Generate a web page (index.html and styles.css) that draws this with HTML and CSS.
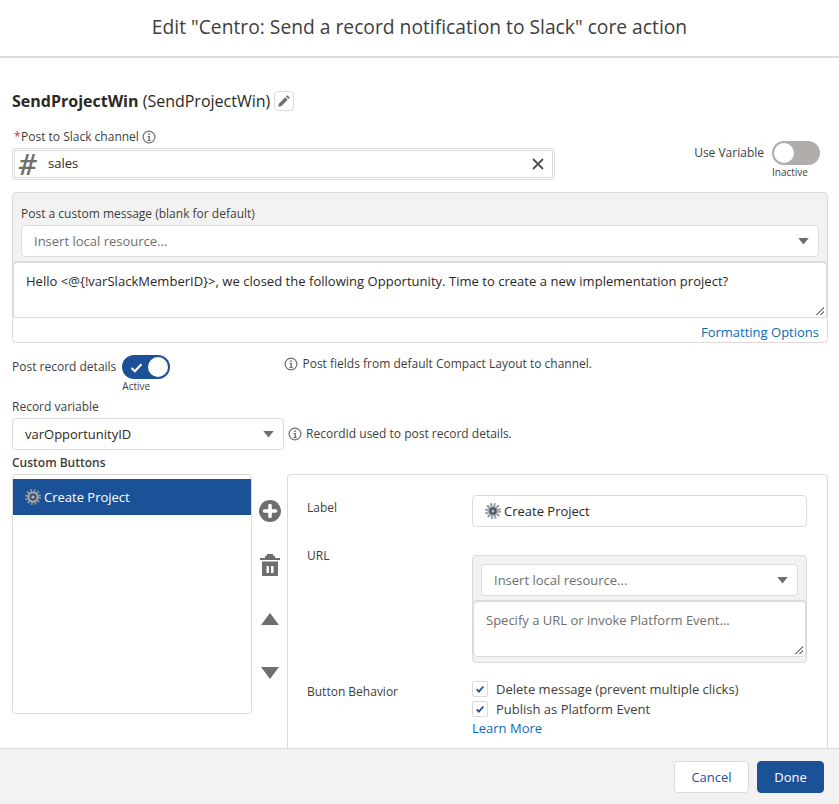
FILE: index.html
```html
<!DOCTYPE html>
<html lang="en">
<head>
    <meta charset="UTF-8">
    <meta name="viewport" content="width=device-width, initial-scale=1.0">
    <title>Edit core action</title>
    <link rel="stylesheet" href="styles.css">
</head>
<body>
    <svg class="svg-defs" width="0" height="0">
        <symbol id="gear" viewBox="0 0 16 16">
            <circle cx="8" cy="8" r="6.500" fill="none" stroke="#8d9299" stroke-width="3" stroke-dasharray="1.700 1.700"/>
            <circle cx="8" cy="8" r="5.600" fill="#a9aeb5"/>
            <circle cx="8" cy="8" r="3.700" fill="#4e5560"/>
            <circle cx="8" cy="8" r="1.600" fill="#a9bdd0"/>
        </symbol>
        <symbol id="info" viewBox="0 0 14 14">
            <circle cx="7" cy="7" r="5.900" fill="none" stroke="#706e6b" stroke-width="1.200"/>
            <circle cx="7" cy="4.200" r=".9" fill="#706e6b"/>
            <path fill="#706e6b" d="M5.500 6h2.400v3.900h.8v1H5.400v-1h1.100V7h-1z"/>
        </symbol>
        <symbol id="caret" viewBox="0 0 12 8">
            <path fill="#706e6b" d="M0 0h12L6 7.500z"/>
        </symbol>
        <symbol id="tick" viewBox="0 0 12 12">
            <path fill="none" stroke="#1b5297" stroke-width="2.200" d="M2 6.500l2.700 2.700L10 3"/>
        </symbol>
    </svg>

    <div class="modal">
        <header class="modal-header">
            <h1>Edit "Centro: Send a record notification to Slack" core action</h1>
        </header>

        <main class="modal-body">
            <div class="title-row">
                <h2><strong>SendProjectWin</strong> (SendProjectWin)</h2>
                <button class="edit-btn" type="button" aria-label="Edit">
                    <svg width="14" height="14" viewBox="0 0 14 14"><path fill="#706e6b" d="M10.300 1.200l2.500 2.500-1.300 1.300L9 2.500zM8.200 3.300l2.500 2.500-6.200 6.200-3.300.8.800-3.300z"/></svg>
                </button>
            </div>

            <div class="channel-row">
                <div class="channel-field">
                    <label class="field-label"><span class="req">*</span>Post to Slack channel <svg class="info" width="14" height="14"><use href="#info"/></svg></label>
                    <div class="channel-input">
                        <span class="hash">#</span>
                        <span class="channel-name">sales</span>
                        <svg class="clear" width="12" height="12" viewBox="0 0 12 12"><path stroke="#514f4d" stroke-width="1.800" d="M1 1l10 10M11 1L1 11"/></svg>
                    </div>
                </div>
                <div class="use-variable">
                    <span class="toggle-label">Use Variable</span>
                    <div class="toggle-wrap">
                        <span class="toggle off"><span class="knob"></span></span>
                        <span class="toggle-text">Inactive</span>
                    </div>
                </div>
            </div>

            <section class="message-panel">
                <label class="panel-label">Post a custom message (blank for default)</label>
                <div class="select select-wide">
                    <span class="placeholder">Insert local resource...</span>
                    <svg width="11" height="7"><use href="#caret"/></svg>
                </div>
                <div class="message-box">Hello &lt;@{!varSlackMemberID}&gt;, we closed the following Opportunity. Time to create a new implementation project?<span class="grip"></span></div>
                <div class="format-link"><a href="#">Formatting Options</a></div>
            </section>

            <div class="details-row">
                <span class="toggle-label">Post record details</span>
                <div class="toggle-wrap">
                    <span class="toggle on">
                        <svg width="13" height="13" viewBox="0 0 12 12"><path fill="none" stroke="#fff" stroke-width="2" d="M1.500 6.500l3 3L10.500 3"/></svg>
                        <span class="knob"></span>
                    </span>
                    <span class="toggle-text">Active</span>
                </div>
                <p class="hint details-hint"><svg class="info" width="14" height="14"><use href="#info"/></svg> Post fields from default Compact Layout to channel.</p>
            </div>

            <label class="field-label var-label">Record variable</label>
            <div class="var-row">
                <div class="select var-select">
                    <span>varOpportunityID</span>
                    <svg width="11" height="7"><use href="#caret"/></svg>
                </div>
                <p class="hint"><svg class="info" width="14" height="14"><use href="#info"/></svg> RecordId used to post record details.</p>
            </div>

            <h3 class="buttons-title">Custom Buttons</h3>
            <div class="buttons-row">
                <div class="button-list">
                    <div class="button-item selected">
                        <svg width="16" height="16"><use href="#gear"/></svg>
                        Create Project
                    </div>
                </div>

                <div class="list-tools">
                    <svg class="tool-add" width="22" height="22" viewBox="0 0 22 22"><circle cx="11" cy="11" r="11" fill="#706e6b"/><path stroke="#fff" stroke-width="3.600" stroke-linecap="round" d="M11 5.500v11M5.500 11h11"/></svg>
                    <svg class="tool-trash" width="20" height="22" viewBox="0 0 20 22"><path fill="#706e6b" d="M0 4h20v2H0zM7 0h6v1.800h2V4H5V1.800h2zM2 7.500h16V21a1 1 0 0 1-1 1H3a1 1 0 0 1-1-1z"/><path fill="#fff" d="M6.500 12h2.500v7H6.500zM11 12h2.500v7H11z"/></svg>
                    <svg class="tool-up" width="18" height="12" viewBox="0 0 18 12"><path fill="#706e6b" d="M9 0l9 12H0z"/></svg>
                    <svg class="tool-down" width="18" height="12" viewBox="0 0 18 12"><path fill="#706e6b" d="M0 0h18L9 12z"/></svg>
                </div>

                <div class="button-detail">
                    <div class="detail-row label-row">
                        <span class="detail-label">Label</span>
                        <div class="text-input">
                            <svg width="16" height="16"><use href="#gear"/></svg>
                            Create Project
                        </div>
                    </div>
                    <div class="detail-row url-row">
                        <span class="detail-label">URL</span>
                        <div class="url-panel">
                            <div class="select url-select">
                                <span class="placeholder">Insert local resource...</span>
                                <svg width="11" height="7"><use href="#caret"/></svg>
                            </div>
                            <div class="url-box">Specify a URL or invoke Platform Event...<span class="grip"></span></div>
                        </div>
                    </div>
                    <div class="detail-row behavior-row">
                        <span class="detail-label">Button Behavior</span>
                        <div class="checks">
                            <div class="check-line"><span class="checkbox"><svg width="10" height="10"><use href="#tick"/></svg></span> Delete message (prevent multiple clicks)</div>
                            <div class="check-line"><span class="checkbox"><svg width="10" height="10"><use href="#tick"/></svg></span> Publish as Platform Event</div>
                            <a class="learn-more" href="#">Learn More</a>
                        </div>
                    </div>
                </div>
            </div>
        </main>

        <footer class="modal-footer">
            <button class="btn btn-cancel" type="button">Cancel</button>
            <button class="btn btn-done" type="button">Done</button>
        </footer>
    </div>
</body>
</html>
```

FILE: styles.css
```css
* {
    box-sizing: border-box;
}
html, body {
    height: 100%;
}
body {
    margin: 0;
    font-family: "Open Sans", "Noto Sans", Arial, sans-serif;
    font-size: 13px;
    line-height: 18px;
    color: #3e3e3c;
    background-color: #fff;
    overflow: hidden;
}
a {
    color: #0b6cb3;
    text-decoration: none;
}
.svg-defs {
    position: absolute;
}
.modal {
    height: 804px;
    display: flex;
    flex-direction: column;
}
.modal-header {
    height: 58px;
    flex: none;
    border-bottom: 2px solid #dddbda;
    padding-bottom: 2px;
    display: flex;
    align-items: center;
    justify-content: center;
}
.modal-header h1 {
    margin: 0;
    font-size: 19.25px;
    font-weight: 400;
    color: #3e3e3c;
}
.modal-body {
    flex: 1;
    min-height: 0;
    overflow: hidden;
    padding: 31px 11px 0 12px;
}
.title-row {
    display: flex;
    align-items: center;
    height: 24px;
}
.title-row h2 {
    margin: 0;
    font-size: 16px;
    font-weight: 400;
    color: #2b2826;
}
.edit-btn {
    width: 20px;
    height: 20px;
    margin-left: 4px;
    padding: 0;
    background: #fff;
    border: 1px solid #dddbda;
    border-radius: 4px;
    display: flex;
    align-items: center;
    justify-content: center;
}
.channel-row {
    display: flex;
    justify-content: space-between;
    margin-top: 15px;
    height: 56px;
}
.channel-field {
    width: 543px;
}
.field-label {
    display: block;
    font-size: 12px;
    line-height: 18px;
}
.req {
    display: inline-block;
    width: 9px;
    padding-left: 2px;
    color: #c23934;
}
.info {
    vertical-align: -3px;
    margin-right: 1px;
}
.channel-input {
    height: 32px;
    margin-top: 2px;
    border: 1px solid #dddbda;
    border-radius: 4px;
    padding: 1px;
    display: flex;
    align-items: center;
    box-shadow: inset 0 0 0 1px #fff, inset 0 0 0 2px #dddbda;
}
.hash {
    font-size: 29px;
    font-weight: 600;
    font-style: italic;
    width: 34px;
    padding-left: 4px;
    color: #706e6b;
}
.channel-name {
    flex: 1;
    padding-bottom: 2px;
    color: #2b2826;
}
.clear {
    margin-right: 9px;
}
.use-variable {
    display: flex;
    align-items: flex-start;
    gap: 8px;
    padding: 13px 8px 0 0;
}
.toggle-label {
    font-size: 12px;
    line-height: 24px;
}
.toggle-wrap {
    display: flex;
    flex-direction: column;
    align-items: flex-start;
    width: 48px;
}
.toggle {
    width: 48px;
    height: 24px;
    border-radius: 12px;
    padding: 2px;
    display: flex;
    align-items: center;
}
.toggle.off {
    background-color: #b0adab;
}
.toggle.on {
    background-color: #1b5297;
    justify-content: space-between;
    padding-left: 8px;
}
.knob {
    width: 20px;
    height: 20px;
    border-radius: 50%;
    background-color: #fff;
}
.toggle-text {
    font-size: 10px;
    line-height: 13px;
    margin-top: 1px;
}
.message-panel {
    margin-top: 8px;
    height: 151px;
    background-color: #f3f2f2;
    border: 1px solid #dddbda;
    border-radius: 4px;
    padding: 12px 0 0;
}
.panel-label {
    display: block;
    font-size: 12px;
    line-height: 18px;
    margin-left: 8px;
}
.select {
    height: 32px;
    background-color: #fff;
    border: 1px solid #dddbda;
    border-radius: 4px;
    display: flex;
    align-items: center;
    justify-content: space-between;
    padding: 0 9px 0 12px;
}
.select-wide {
    margin: 2px 8px 0 8px;
}
.placeholder {
    color: #706e6b;
}
.message-box {
    height: 56px;
    margin-top: 5px;
    background-color: #fff;
    border: 1px solid #dddbda;
    border-radius: 4px;
    box-shadow: 0 -1px 0 #dddbda;
    padding: 9px 12px;
    color: #2b2826;
    letter-spacing: .03px;
    position: relative;
}
.grip {
    position: absolute;
    right: 2px;
    bottom: 2px;
    width: 8px;
    height: 8px;
    background: linear-gradient(135deg, transparent 50%, #8a8886 50%, #8a8886 58%, transparent 58%, transparent 75%, #8a8886 75%, #8a8886 83%, transparent 83%);
}
.format-link {
    text-align: right;
    padding: 5px 8px 0 0;
    background-color: #fff;
    height: 24px;
    border-radius: 0 0 4px 4px;
}
.details-row {
    display: flex;
    align-items: flex-start;
    margin-top: 12px;
    height: 38px;
}
.details-row .toggle-label {
    margin-right: 6px;
}
.hint {
    margin: 0;
    font-size: 12px;
}
.details-hint {
    margin-left: 114px;
    line-height: 18px;
}
.var-label {
    margin-top: 5px;
}
.var-row {
    display: flex;
    align-items: center;
    margin-top: 2px;
}
.var-select {
    width: 272px;
    color: #2b2826;
}
.var-row .hint {
    margin-left: 4px;
}
.buttons-title {
    margin: 4px 0 2px;
    font-size: 12px;
    line-height: 18px;
    font-weight: 600;
}
.buttons-row {
    display: flex;
    align-items: flex-start;
}
.button-list {
    width: 240px;
    height: 240px;
    border: 1px solid #dddbda;
    border-radius: 4px;
    padding-top: 4px;
    flex: none;
}
.button-item {
    height: 36px;
    display: flex;
    align-items: center;
    gap: 3px;
    padding-left: 12px;
}
.button-item.selected {
    background-color: #1b5297;
    color: #fff;
}
.list-tools {
    width: 35px;
    flex: none;
    display: flex;
    flex-direction: column;
    align-items: center;
    padding-top: 26px;
}
.tool-trash {
    margin-top: 32px;
}
.tool-up {
    margin-top: 37px;
}
.tool-down {
    margin-top: 42px;
}
.button-detail {
    flex: 1;
    height: 300px;
    border: 1px solid #dddbda;
    border-radius: 4px;
    padding: 20px 20px 0 19px;
}
.detail-row {
    display: flex;
    align-items: flex-start;
}
.detail-label {
    width: 165px;
    flex: none;
    font-size: 12px;
}
.text-input {
    flex: 1;
    height: 32px;
    border: 1px solid #dddbda;
    border-radius: 4px;
    display: flex;
    align-items: center;
    gap: 3px;
    padding: 0 0 1px 12px;
    color: #2b2826;
}
.label-row .detail-label {
    padding-top: 4px;
}
.url-row {
    margin-top: 20px;
}
.url-panel {
    flex: 1;
    height: 108px;
    margin-top: 8px;
    background-color: #f3f2f2;
    border: 1px solid #dddbda;
    border-radius: 4px;
}
.url-select {
    margin: 8px 8px 0 8px;
}
.url-box {
    height: 56px;
    margin-top: 5px;
    background-color: #fff;
    border: 1px solid #dddbda;
    border-radius: 4px;
    box-shadow: 0 -1px 0 #dddbda;
    padding: 9px 12px;
    color: #706e6b;
    position: relative;
}
.behavior-row {
    margin-top: 16px;
}
.behavior-row .detail-label {
    padding-top: 4px;
}
.check-line {
    display: flex;
    align-items: center;
    gap: 8px;
    height: 20px;
}
.checkbox {
    width: 16px;
    height: 16px;
    border: 1px solid #dddbda;
    border-radius: 2px;
    background: #fff;
    display: flex;
    align-items: center;
    justify-content: center;
}
.learn-more {
    display: block;
}
.modal-footer {
    height: 56px;
    flex: none;
    background-color: #f3f2f2;
    border-top: 1px solid #dddbda;
    display: flex;
    justify-content: flex-end;
    align-items: center;
    gap: 8px;
    padding: 0 15px 0 0;
}
.btn {
    height: 32px;
    font-family: inherit;
    font-size: 13px;
    border-radius: 4px;
    border: 1px solid #dddbda;
}
.btn-cancel {
    width: 75px;
    background-color: #fff;
    color: #1b5297;
}
.btn-done {
    width: 67px;
    background-color: #1b5297;
    border-color: #1b5297;
    color: #fff;
}
```
